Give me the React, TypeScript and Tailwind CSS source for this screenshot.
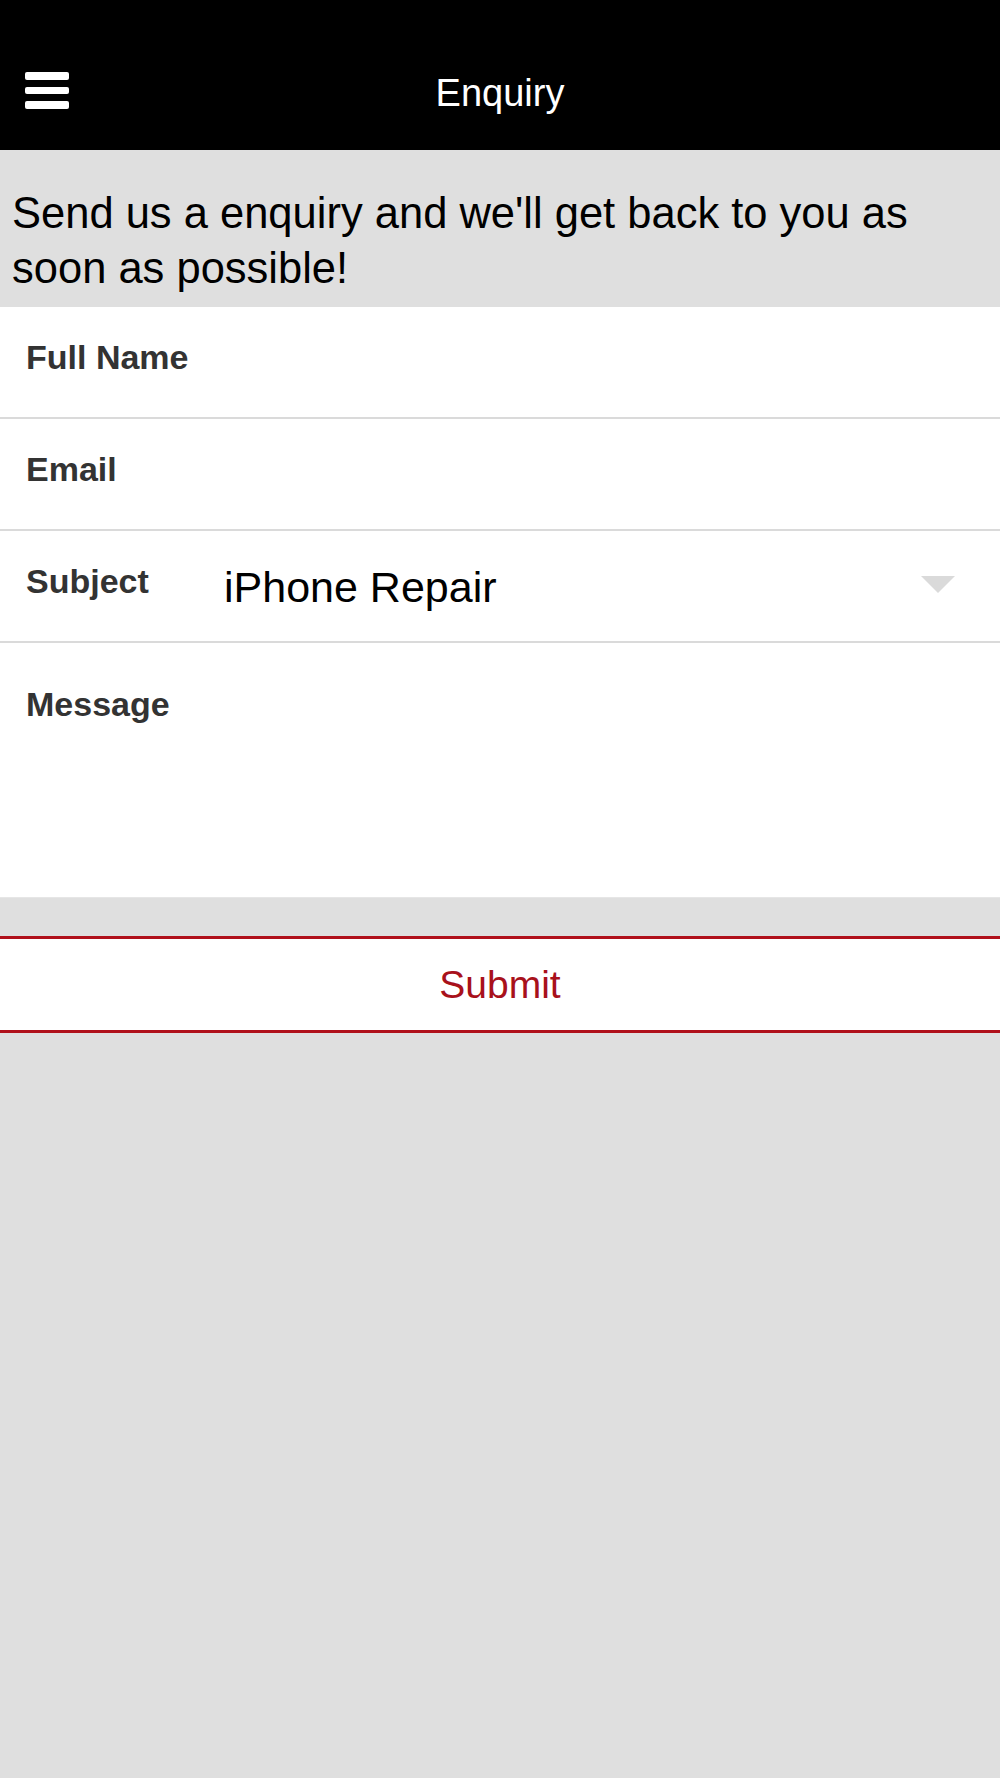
export default function App() {
  return (
    <div className="min-h-[1778px] bg-[#dfdfdf] font-['Liberation_Sans',Arial,sans-serif]">
      {/* Top bar */}
      <header className="relative flex h-[150px] items-center justify-center bg-black">
        <button className="absolute left-[25px] top-[72px] flex w-[44px] flex-col gap-[7px]">
          <span className="block h-[7.5px] w-full rounded-[2px] bg-white" />
          <span className="block h-[7.5px] w-full rounded-[2px] bg-white" />
          <span className="block h-[7.5px] w-full rounded-[2px] bg-white" />
        </button>
        <h1 className="pt-[36px] text-[38px] leading-[40px] text-white">Enquiry</h1>
      </header>

      {/* Intro */}
      <p className="px-[12px] pt-[36px] pb-[11px] text-[43.5px] leading-[55px] text-black">
        Send us a enquiry and we'll get back to you as soon as possible!
      </p>

      {/* Form rows */}
      <div className="bg-white">
        <FieldRow label="Full Name" />
        <FieldRow label="Email" />
        <div className="flex h-[112px] border-b-2 border-[#dadada]">
          <span className="w-[224px] shrink-0 pl-[26px] pt-[30px] text-[34px] font-bold leading-[40px] text-[#333]">
            Subject
          </span>
          <div className="flex flex-1 items-start justify-between pr-[45px]">
            <span className="pt-[31px] text-[43px] leading-[50px] text-black">iPhone Repair</span>
            <svg width="34" height="17" viewBox="0 0 34 17" className="mt-[45px]">
              <polygon points="0,0 34,0 17,17" fill="#dadada" />
            </svg>
          </div>
        </div>
        <div className="h-[255px] border-b border-[#e6e6e6]">
          <span className="block pl-[26px] pt-[41px] text-[34px] font-bold leading-[40px] text-[#333]">Message</span>
        </div>
      </div>

      {/* Submit */}
      <div className="mt-[38px] border-y-[3px] border-[#b0101b] bg-white">
        <button className="h-[91px] w-full text-[39px] leading-[44px] text-[#a8111b]">Submit</button>
      </div>
    </div>
  );
}

function FieldRow({ label }: { label: string }) {
  return (
    <div className="h-[112px] border-b-2 border-[#dadada]">
      <span className="block pl-[26px] pt-[30px] text-[34px] font-bold leading-[40px] text-[#333]">{label}</span>
    </div>
  );
}
